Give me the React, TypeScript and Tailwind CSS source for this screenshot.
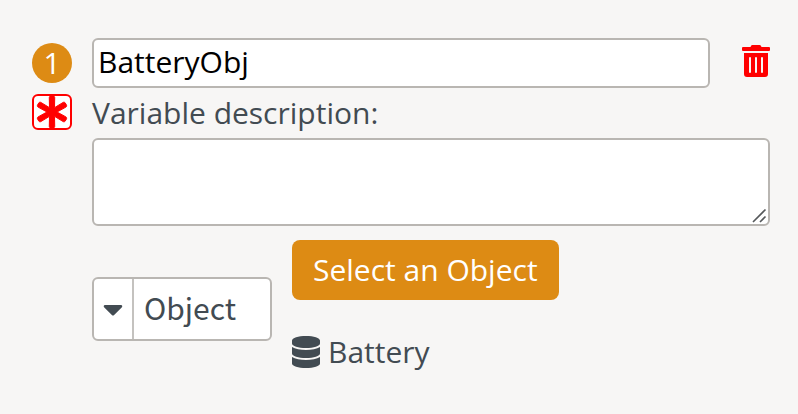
import { useState } from 'react';
import { FaAsterisk, FaCaretDown, FaDatabase, FaTrashAlt } from 'react-icons/fa';

const VARIABLE_TYPES = ['Object', 'String', 'Number', 'Boolean'];

function ResizeGrip() {
  return (
    <svg
      className="pointer-events-none absolute right-0.5 bottom-0.5 size-4"
      viewBox="0 0 16 16"
      fill="none"
      stroke="#55585a"
      strokeWidth="1.6"
      aria-hidden="true"
    >
      <path d="M1 14 13.5 1.5M8 14 13.5 8.5" />
    </svg>
  );
}

function TypeSelect({ value, onChange }: { value: string; onChange: (value: string) => void }) {
  return (
    <div className="relative h-16 w-[180px] shrink-0">
      <select
        aria-label="Variable type"
        value={value}
        onChange={e => onChange(e.target.value)}
        className="size-full appearance-none rounded-md border-2 border-[#b9b6b2] bg-white pb-1 pl-[50px] font-['Noto_Sans_CJK_SC','Noto_Sans',sans-serif] text-[30px]"
      >
        {VARIABLE_TYPES.map(t => <option key={t}>{t}</option>)}
      </select>
      <span className="pointer-events-none absolute inset-y-0.5 left-0.5 flex w-10 items-center justify-center border-r-2 border-[#c4c2bf]">
        <FaCaretDown className="size-8" />
      </span>
    </div>
  );
}

export default function App() {
  const [name, setName] = useState('BatteryObj');
  const [description, setDescription] = useState('');
  const [type, setType] = useState('Object');

  return (
    <main className="min-h-screen bg-[#f7f6f5] pt-[38px] pr-7 pb-7 pl-8 font-['Open_Sans',sans-serif] text-[30px] leading-10 text-[#424b52]">
      <div className="flex gap-5">
        {/* Index + required marker */}
        <div className="flex w-10 shrink-0 flex-col gap-[11px] pt-[5px]">
          <span className="flex size-10 items-center justify-center rounded-full bg-[#dd8b14] text-white">1</span>
          <button
            type="button"
            aria-label="Required"
            className="flex h-9 items-center justify-center rounded-md border-2 border-[#ff0000] bg-white text-[#ff0000]"
          >
            <FaAsterisk className="size-8 stroke-[#ff0000] stroke-[16]" />
          </button>
        </div>

        <div className="min-w-0 flex-1">
          <div className="flex items-center gap-8">
            <input
              type="text"
              aria-label="Variable name"
              value={name}
              onChange={e => setName(e.target.value)}
              className="h-[50px] min-w-0 flex-1 rounded-md border-2 border-[#b9b6b2] bg-white px-1 pb-1 text-black"
            />
            <button type="button" aria-label="Delete variable" className="pb-1 text-[#ff0000]">
              <FaTrashAlt className="h-8 w-7" />
            </button>
          </div>

          <label htmlFor="description" className="block h-[50px] pt-[5px]">Variable description:</label>
          <div className="relative">
            <textarea
              id="description"
              value={description}
              onChange={e => setDescription(e.target.value)}
              className="block h-[88px] w-full resize-none rounded-md border-2 border-[#b9b6b2] bg-white px-1"
            />
            <ResizeGrip />
          </div>

          {/* Type + selected object */}
          <div className="mt-3.5 flex items-center gap-5">
            <TypeSelect value={type} onChange={setType} />
            <div className="flex flex-col items-start gap-8 pb-1.5">
              <button type="button" className="h-[60px] rounded-lg bg-[#dd8b14] px-[21px] text-white">
                Select an Object
              </button>
              <div className="flex items-center gap-2">
                <FaDatabase className="h-8 w-7" />
                <span>Battery</span>
              </div>
            </div>
          </div>
        </div>
      </div>
    </main>
  );
}
